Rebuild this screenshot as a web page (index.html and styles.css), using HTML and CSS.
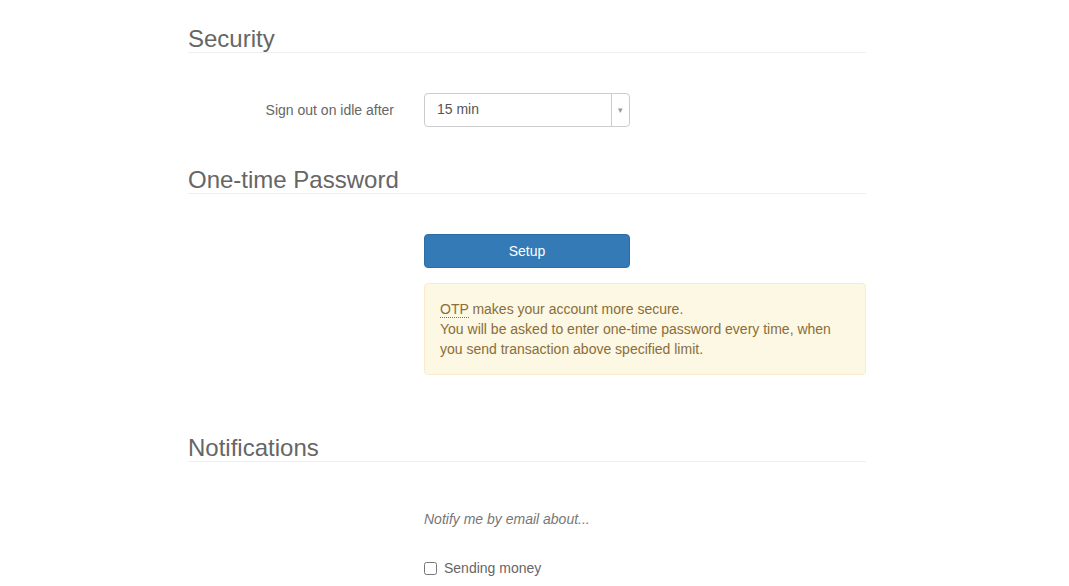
FILE: index.html
```html
<!DOCTYPE html>
<html lang="en">
<head>
  <meta charset="UTF-8" />
  <title>Settings</title>
  <link rel="stylesheet" href="styles.css">
</head>
<body>
  <div class="container">

    <!-- security -->
    <h3 class="section-title first">Security</h3>
    <div class="form-row row-select">
      <label class="row-label" for="idle">Sign out on idle after</label>
      <div class="row-control">
        <div class="select-box" id="idle">
          <span class="select-value">15 min</span>
          <span class="select-arrow">&#9662;</span>
        </div>
      </div>
    </div>

    <!-- otp -->
    <h3 class="section-title">One-time Password</h3>
    <div class="form-row row-otp">
      <div class="row-label"></div>
      <div class="row-control">
        <button class="btn-setup" type="button">Setup</button>
        <div class="alert-warning">
          <abbr title="One-time password">OTP</abbr> makes your account more secure.<br>
          You will be asked to enter one-time password every time, when you send transaction above specified limit.
        </div>
      </div>
    </div>

    <!-- notifications -->
    <h3 class="section-title notif">Notifications</h3>
    <div class="form-row row-notify">
      <div class="row-label"></div>
      <div class="row-control">
        <p class="hint">Notify me by email about...</p>
        <label class="check"><input type="checkbox"> Sending money</label>
      </div>
    </div>

  </div>
</body>
</html>
```

FILE: styles.css
```css
* { box-sizing: border-box; margin: 0; padding: 0 }
html, body {
  background: #fff;
  font-family: 'Liberation Sans', Arial, sans-serif;
  font-size: 14px;
  line-height: 20px;
  color: #555;
}

.container {
  width: 678px;
  margin-left: 188px;
}

/*–––– Section headings ––––*/
.section-title {
  font-size: 24px;
  font-weight: normal;
  line-height: 26px;
  color: #666;
  border-bottom: 1px solid #eee;
  margin-top: 40px;
}
.section-title.first { margin-top: 26px }
.section-title.notif { margin-top: 60px }

/*–––– Form rows ––––*/
.form-row {
  display: flex;
  gap: 30px;
}
.row-label {
  width: 206px;
  flex: none;
  text-align: right;
  color: #666;
  line-height: 34px;
}
.row-control { flex: 1 }

.row-select { margin-top: 40px }
.row-otp { margin-top: 40px }
.row-notify { margin-top: 47px }

/*–––– Select ––––*/
.select-box {
  display: flex;
  width: 206px;
  height: 34px;
  border: 1px solid #ccc;
  border-radius: 4px;
  color: #555;
}
.select-value {
  flex: 1;
  padding: 0 12px;
  line-height: 30px;
}
.select-arrow {
  width: 18px;
  border-left: 1px solid #ccc;
  text-align: center;
  font-size: 9px;
  line-height: 32px;
  color: #999;
}

/*–––– Setup button + alert ––––*/
.btn-setup {
  display: block;
  width: 206px;
  height: 34px;
  background: #337ab7;
  border: 1px solid #2e6da4;
  border-radius: 4px;
  color: #fff;
  font: inherit;
  cursor: pointer;
}
.alert-warning {
  margin-top: 15px;
  padding: 15px;
  background: #fcf8e3;
  border: 1px solid #faebcc;
  border-radius: 4px;
  color: #8a6d3b;
}
.alert-warning abbr {
  text-decoration: none;
  border-bottom: 1px dotted #8a6d3b;
  cursor: help;
}

/*–––– Notifications ––––*/
.hint {
  font-style: italic;
  color: #777;
}
.check {
  display: flex;
  align-items: center;
  gap: 7px;
  margin-top: 29px;
  color: #666;
}
.check input {
  width: 13px; height: 13px;
  margin: 0;
}
```
